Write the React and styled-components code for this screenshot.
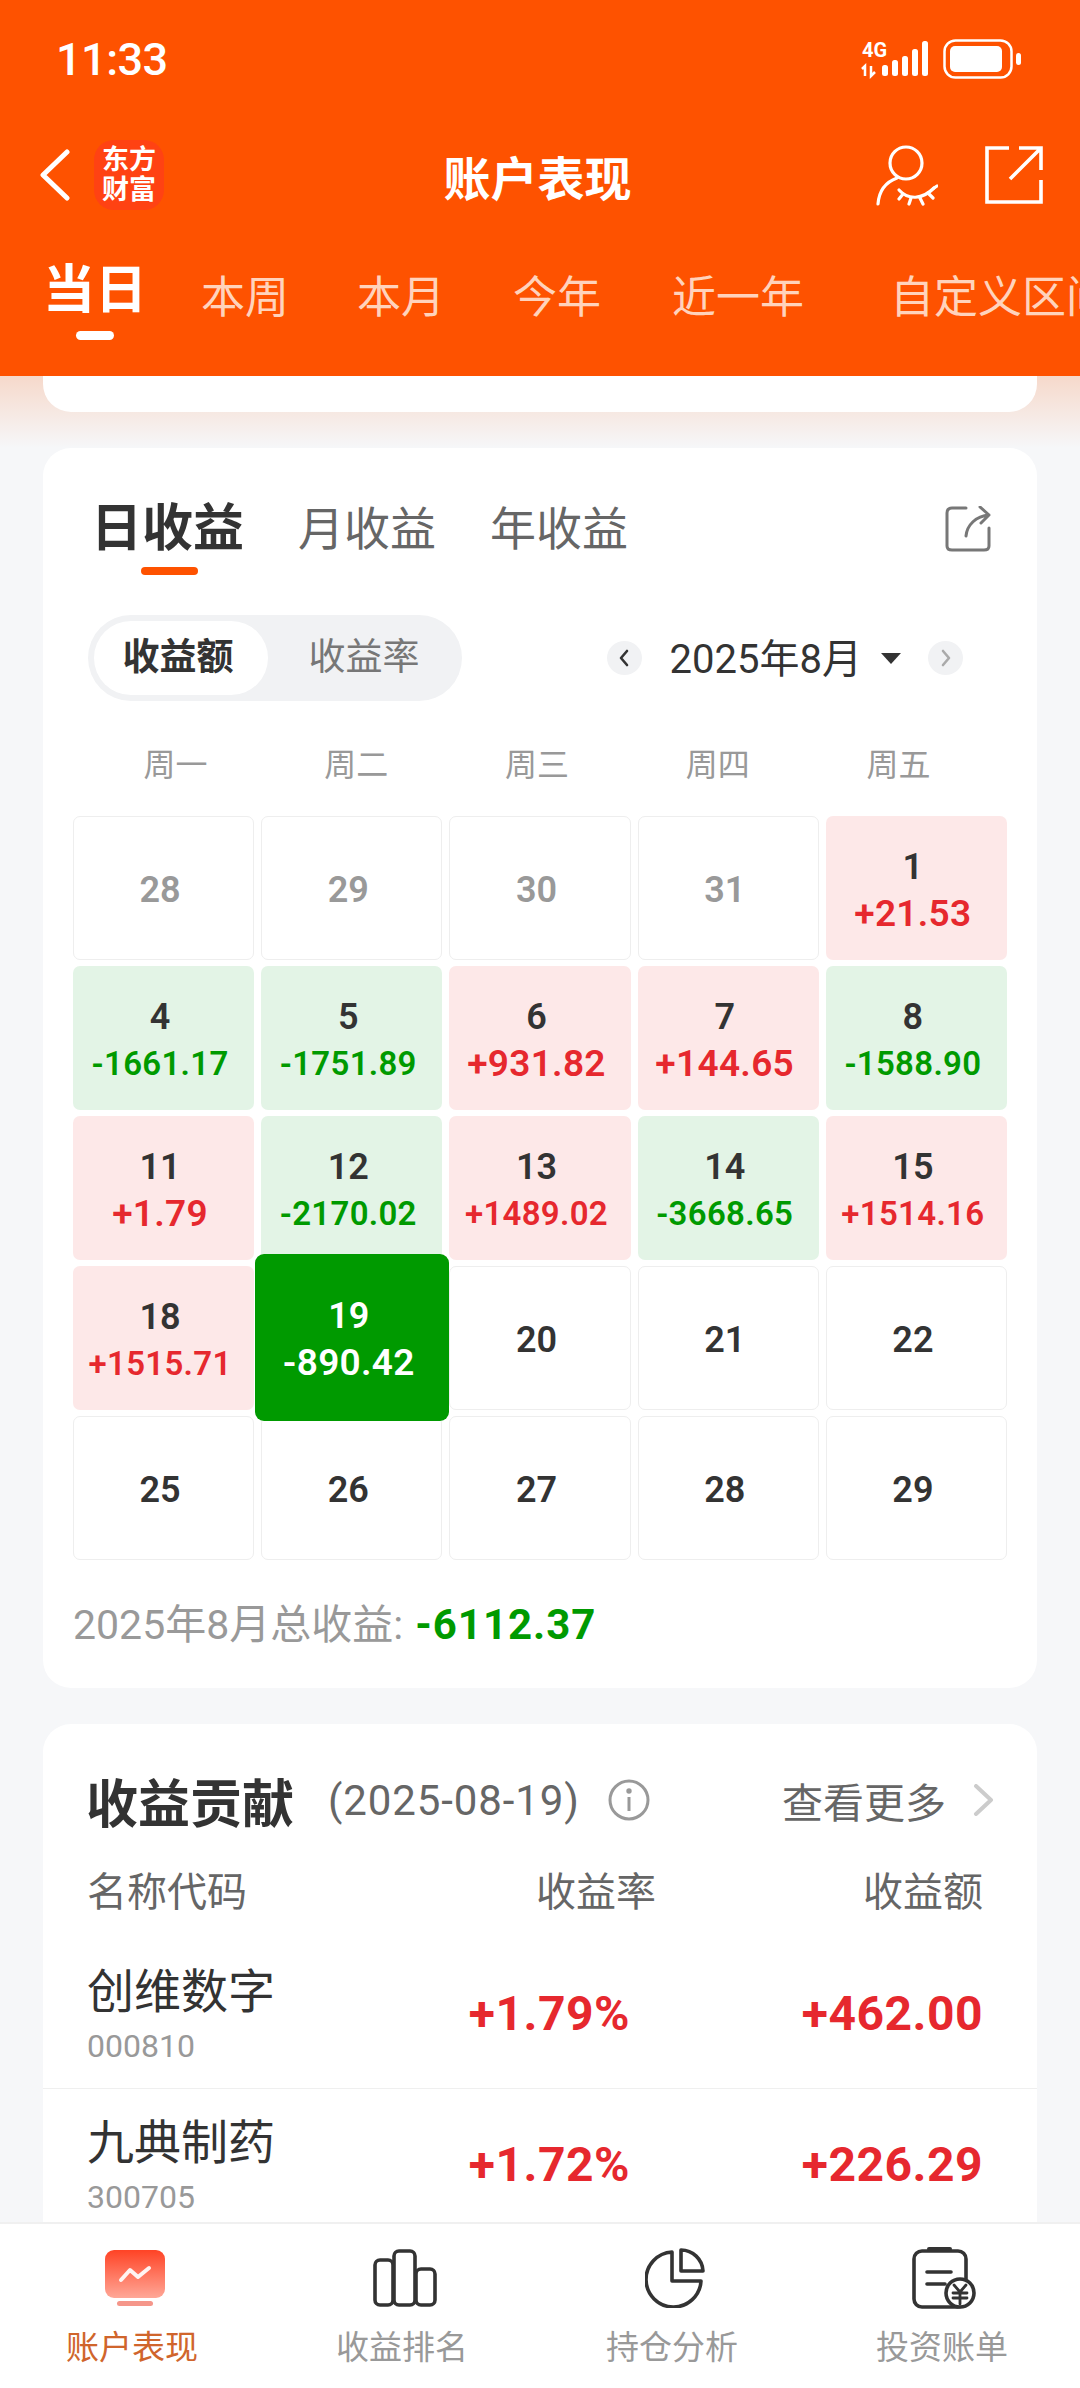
import styled, { createGlobalStyle } from 'styled-components';

const GlobalStyle = createGlobalStyle`
  html, body {
    margin: 0;
    padding: 0;
    background: #f6f7f9;
  }
  body {
    font-family: 'Roboto', 'Noto Sans CJK SC', sans-serif;
  }
`;

const Page = styled.div`
  display: flex;
  flex-direction: column;
  width: 1080px;
  height: 2388px;
  overflow: hidden;
`;

//! Header

const Header = styled.header`
  flex: none;
  height: 376px;
  background: #fe5200;
  color: #fff;
  overflow: hidden;
`;

const StatusBar = styled.div`
  display: flex;
  align-items: center;
  justify-content: space-between;
  height: 118px;
  padding: 0 59px 0 56px;
`;

const StatusIcons = styled.div`
  display: flex;
  align-items: center;
  gap: 15px;
`;

const Clock = styled.span`
  font-size: 45px;
  font-weight: 500;
  letter-spacing: -0.5px;
`;

const TopBar = styled.div`
  display: grid;
  grid-template-columns: 1fr auto 1fr;
  align-items: center;
  height: 114px;
  padding: 0 37px 0 40px;
`;

const TopLeft = styled.div`
  display: flex;
  align-items: center;
  gap: 24px;
`;

const TopRight = styled.div`
  display: flex;
  align-items: center;
  justify-content: flex-end;
  gap: 47px;
`;

const Logo = styled.div`
  display: flex;
  align-items: center;
  justify-content: center;
  width: 70px;
  height: 70px;
  border-radius: 20px;
  background: #ff4213;
  font-size: 27px;
  line-height: 30px;
  font-weight: 700;
  text-align: center;
`;

const Title = styled.h1`
  margin: 0 0 0 -8px;
  font-size: 47px;
  font-weight: 700;
`;

const PeriodTabs = styled.div`
  display: flex;
  align-items: flex-start;
  gap: 68px;
  padding-left: 43px;
  white-space: nowrap;
`;

const PeriodTab = styled.div`
  display: flex;
  flex-direction: column;
  align-items: center;
  margin-right: ${p => (p.$active ? '-14px' : '0')};
  margin-left: ${p => p.$shift || '0'};
  padding-top: ${p => (p.$active ? '28px' : '38px')};
  font-size: ${p => (p.$active ? '52px' : '44px')};
  font-weight: ${p => (p.$active ? 700 : 400)};
  line-height: ${p => (p.$active ? '62px' : '56px')};
  color: ${p => (p.$active ? '#fff' : '#ffd3bc')};
`;

const PeriodMark = styled.span`
  width: 38px;
  height: 9px;
  margin-top: 9px;
  border-radius: 5px;
  background: #fff;
`;

//! Content

const Content = styled.main`
  flex: 1;
  min-height: 0;
  overflow: hidden;
  padding: 0 43px;
  background: linear-gradient(#f6d9cb 0, #f6f7f9 72px);
`;

const ClippedCard = styled.div`
  height: 36px;
  border-radius: 0 0 28px 28px;
  background: #fff;
`;

const Card = styled.section`
  margin-top: 36px;
  border-radius: 28px;
  background: #fff;
`;

const CalendarCard = styled(Card)`
  padding: 52px 30px 37px;
`;

const ModeRow = styled.div`
  display: flex;
  align-items: flex-start;
  gap: 54px;
  padding: 0 16px 0 18px;
`;

const ModeTab = styled.div`
  display: flex;
  flex-direction: column;
  align-items: center;
  font-size: ${p => (p.$active ? '51px' : '46px')};
  font-weight: ${p => (p.$active ? 700 : 400)};
  line-height: 58px;
  color: ${p => (p.$active ? '#333' : '#666')};
`;

const ModeMark = styled.span`
  width: 57px;
  height: 8px;
  margin: 9px 0 0 4px;
  border-radius: 4px;
  background: #fe5200;
`;

const ShareButton = styled.div`
  margin: 6px 0 0 auto;
  line-height: 0;
`;

const FilterRow = styled.div`
  display: flex;
  align-items: center;
  justify-content: space-between;
  margin-top: 40px;
  padding: 0 44px 0 15px;
`;

const Segment = styled.div`
  display: flex;
  align-items: center;
  width: 374px;
  height: 86px;
  box-sizing: border-box;
  padding: 0 6px;
  border-radius: 43px;
  background: #f1f2f4;
`;

const SegmentItem = styled.div`
  box-sizing: border-box;
  width: ${p => (p.$active ? '174px' : '182px')};
  height: 74px;
  padding: ${p => (p.$active ? '0 6px 0 0' : '0 0 0 10px')};
  border-radius: 37px;
  background: ${p => (p.$active ? '#fff' : 'transparent')};
  font-size: 37px;
  font-weight: ${p => (p.$active ? 700 : 400)};
  line-height: 74px;
  text-align: center;
  color: ${p => (p.$active ? '#333' : '#777')};
`;

const MonthPicker = styled.div`
  display: flex;
  align-items: center;
  font-size: 40px;
  color: #333;
`;

const MonthArrow = styled.span`
  display: flex;
  align-items: center;
  justify-content: center;
  width: 35px;
  height: 34px;
  border-radius: 50%;
  background: #f1f2f4;
`;

const MonthLabel = styled.span`
  margin: -4px 19px 0 28px;
`;

const Caret = styled.span`
  width: 0;
  height: 0;
  margin-right: 27px;
  border-left: 10px solid transparent;
  border-right: 10px solid transparent;
  border-top: 11px solid #333;
`;

const Weekdays = styled.div`
  display: grid;
  grid-template-columns: repeat(5, 180.8px);
  margin: 42px 0 29px 12px;
  font-size: 32px;
  line-height: 44px;
  text-align: center;
  color: #999;
`;

const DayGrid = styled.div`
  display: grid;
  grid-template-columns: repeat(5, 1fr);
  grid-auto-rows: 144px;
  gap: 6px 7px;
`;

const DayCell = styled.div`
  position: relative;
  display: flex;
  flex-direction: column;
  align-items: center;
  justify-content: center;
  box-sizing: border-box;
  padding: 4px 7px 0 0;
  border-radius: 7px;
  border: ${p => (p.$tone === 'plain' || p.$tone === 'past' ? '1px solid #eeeeee' : 'none')};
  background: ${p => ({ up: '#fde8e8', down: '#e3f4e6', today: '#009a00' }[p.$tone] || '#fff')};
  color: ${p => ({ past: '#999', today: '#fff' }[p.$tone] || '#333')};
  ${p => p.$tone === 'today' && `
    z-index: 1;
    margin: -12px -7px -11px -6px;
    border-radius: 9px;
  `}
`;

const DayNumber = styled.div`
  font-size: 36px;
  font-weight: 600;
  line-height: 44px;
`;

const DayValue = styled.div`
  margin-top: 3px;
  font-size: ${p => (p.$long ? '33px' : '37px')};
  font-weight: 600;
  line-height: 44px;
  letter-spacing: 0.3px;
  color: ${p => ({ up: '#e6282e', down: '#009a00', today: '#fff' }[p.$tone])};
`;

const MonthTotal = styled.div`
  display: flex;
  align-items: baseline;
  gap: 12px;
  margin-top: 39px;
  font-size: 41px;
  line-height: 52px;
  color: #999;

  b {
    font-size: 42px;
    font-weight: 700;
    letter-spacing: 1px;
    color: #009a00;
  }
`;

const ContribCard = styled(Card)`
  padding-top: 48px;
  border-radius: 28px 28px 0 0;
`;

const ContribHead = styled.div`
  display: flex;
  align-items: center;
  height: 56px;
  padding: 0 42px 0 43px;
`;

const ContribTitle = styled.h2`
  margin: 0;
  font-size: 52px;
  font-weight: 700;
  color: #333;
`;

const ContribDate = styled.span`
  margin: 0 28px 0 34px;
  font-size: 42px;
  letter-spacing: 0.9px;
  color: #666;
`;

const MoreLink = styled.span`
  display: flex;
  align-items: center;
  gap: 27px;
  margin-left: auto;
  font-size: 41px;
  color: #666;
`;

const ColumnHead = styled.div`
  display: grid;
  grid-template-columns: 1fr 170px 327px;
  margin-top: 40px;
  margin-bottom: 20px;
  padding: 0 54px 0 44px;
  font-size: 40px;
  line-height: 50px;
  color: #666;

  span + span {
    text-align: right;
  }
`;

const StockRow = styled.div`
  display: grid;
  grid-template-columns: 1fr 200px 353px;
  align-items: center;
  height: 150px;
  padding: 0 54px 0 44px;
  border-bottom: 1px solid #efefef;
`;

const StockName = styled.div`
  margin-top: 4px;
  font-size: 47px;
  line-height: 60px;
  color: #333;
`;

const StockCode = styled.div`
  margin-top: 2px;
  font-size: 32px;
  line-height: 44px;
  color: #999;
`;

const StockValue = styled.div`
  margin-top: 0;
  font-size: 48px;
  font-weight: 700;
  letter-spacing: 0.5px;
  text-align: right;
  color: #e6282e;
`;

//! Bottom nav

const BottomNav = styled.nav`
  flex: none;
  display: grid;
  grid-template-columns: repeat(4, 270px);
  height: 166px;
  box-sizing: border-box;
  margin-left: -3px;
  border-top: 2px solid #f0f0f0;
  background: #fff;
`;

const NavItem = styled.div`
  display: flex;
  flex-direction: column;
  align-items: center;
  font-size: 33px;
  line-height: 44px;
  color: ${p => (p.$active ? '#d0652c' : '#999')};
`;

const NavIcon = styled.div`
  display: flex;
  align-items: center;
  justify-content: center;
  height: 62px;
  margin: 23px 0 17px 6px;
`;

//! Icons

const SignalIcon = () => (
  <svg width="66" height="36" viewBox="0 0 66 36" fill="#fff" overflow="visible">
    <text x="0" y="16" fontFamily="Roboto" fontWeight="700" fontSize="20" fill="#fff">4G</text>
    <path d="M3 35V25l-3 3" stroke="#fff" strokeWidth="2.5" fill="none" />
    <path d="M9 25v10l4-4" stroke="#fff" strokeWidth="2.5" fill="none" />
    <rect x="20" y="24" width="6" height="11" rx="2.5" />
    <rect x="30" y="19" width="6" height="16" rx="2.5" />
    <rect x="40" y="15" width="6" height="20" rx="2.5" />
    <rect x="50" y="8" width="6" height="27" rx="2.5" />
    <rect x="60" y="0" width="6" height="35" rx="2.5" />
  </svg>
);

const BatteryIcon = () => (
  <svg width="78" height="40" viewBox="0 0 78 40">
    <rect x="1.5" y="1.5" width="67" height="37" rx="11" fill="none" stroke="#fff" strokeWidth="2.5" />
    <rect x="7" y="7" width="52" height="26" rx="5" fill="#fff" />
    <rect x="73" y="14" width="5" height="12" rx="2.5" fill="#fff" />
  </svg>
);

const BackIcon = () => (
  <svg width="30" height="52" viewBox="0 0 30 52" fill="none" stroke="#fff" strokeWidth="5" strokeLinecap="round" strokeLinejoin="round">
    <polyline points="27,3 3,26 27,49" />
  </svg>
);

const EyeUserIcon = () => (
  <svg width="62" height="62" viewBox="0 0 62 62" fill="none" stroke="#fff" strokeWidth="3.2" strokeLinecap="round">
    <circle cx="30" cy="19" r="16" />
    <path d="M21 34C10 38 3 47 2 60" />
    <path d="M23 46C32 56 46 56 58 44" />
    <path d="M27 50l-4 5M35 54l-2 6M44 54l3 6M52 49l5 5M58 44l3-2" />
  </svg>
);

const ExportIcon = () => (
  <svg width="58" height="58" viewBox="0 0 58 58" fill="none" stroke="#fff" strokeWidth="3.6">
    <path d="M24 2H2V56H56V34" />
    <path d="M25 33L56 2M34 2H56V24" />
  </svg>
);

const ShareIcon = () => (
  <svg width="46" height="46" viewBox="0 0 46 46" fill="none" stroke="#777" strokeWidth="3" strokeLinecap="round" strokeLinejoin="round">
    <path d="M21 2H7Q2 2 2 7V40Q2 44 7 44H39Q44 44 44 40V22" />
    <path d="M21 30C22 19 31 10 44 9M35 1l9 8-8 8" />
  </svg>
);

const SmallChevron = ({ left }) => (
  <svg width="12" height="18" viewBox="0 0 12 18" fill="none" stroke={left ? '#333' : '#aaa'} strokeWidth="2.6" strokeLinecap="round" strokeLinejoin="round">
    <polyline points={left ? '9,2 3,9 9,16' : '3,2 9,9 3,16'} />
  </svg>
);

const InfoIcon = () => (
  <svg width="42" height="42" viewBox="0 0 42 42" fill="none" stroke="#999" strokeWidth="3">
    <circle cx="21" cy="21" r="19" />
    <path d="M21 18V32" />
    <circle cx="21" cy="12" r="1.2" fill="#999" />
  </svg>
);

const MoreIcon = () => (
  <svg width="22" height="32" viewBox="0 0 22 32" fill="none" stroke="#ccc" strokeWidth="4" strokeLinecap="round" strokeLinejoin="round">
    <polyline points="3,2 18,16 3,30" />
  </svg>
);

const PerformanceIcon = () => (
  <svg width="60" height="56" viewBox="0 0 60 56">
    <defs>
      <linearGradient id="perf" x1="0" y1="0" x2="0" y2="1">
        <stop offset="0" stopColor="#ff4325" />
        <stop offset="1" stopColor="#ffa797" />
      </linearGradient>
    </defs>
    <rect width="60" height="48" rx="9" fill="url(#perf)" />
    <rect x="12" y="51" width="36" height="5" rx="2.5" fill="#f5968a" />
    <polyline points="16,30 25,20 33,27 44,18" fill="none" stroke="#fff" strokeWidth="4" strokeLinecap="round" strokeLinejoin="round" opacity="0.92" />
  </svg>
);

const BarsIcon = () => (
  <svg width="64" height="58" viewBox="0 0 64 58" fill="none" stroke="#333" strokeWidth="3.6" strokeLinejoin="round">
    <rect x="2" y="11" width="18" height="45" rx="5" />
    <rect x="21" y="2" width="21" height="54" rx="5" />
    <rect x="43" y="20" width="19" height="36" rx="5" />
  </svg>
);

const PieIcon = () => (
  <svg width="60" height="60" viewBox="0 0 60 60" fill="none" stroke="#333" strokeWidth="3.6" strokeLinejoin="round">
    <path d="M27 4V33H56A27.5 27.5 0 1 1 27 4Z" />
    <path d="M36 2V23H58A22 22 0 0 0 36 2Z" />
  </svg>
);

const BillIcon = () => (
  <svg width="66" height="62" viewBox="0 0 66 62" fill="none" stroke="#333" strokeWidth="3.6" strokeLinecap="round">
    <rect x="2" y="4" width="52" height="56" rx="8" />
    <path d="M17 2H38" strokeWidth="4" />
    <path d="M15 25H39M15 37H33" />
    <circle cx="48" cy="46" r="14" fill="#fff" />
    <path d="M42 38l6 7 6-7M41 46H55M41 51H55M48 45V57" strokeWidth="2.8" />
  </svg>
);

//! Data

const MODES = ['日收益', '月收益', '年收益'];
const PERIODS = [
  { label: '当日' },
  { label: '本周' },
  { label: '本月' },
  { label: '今年' },
  { label: '近一年', shift: '3px' },
  { label: '自定义区间', shift: '18px' },
];
const WEEKDAYS = ['周一', '周二', '周三', '周四', '周五'];

const DAYS = [
  { day: 28, tone: 'past' },
  { day: 29, tone: 'past' },
  { day: 30, tone: 'past' },
  { day: 31, tone: 'past' },
  { day: 1, value: '+21.53', tone: 'up' },
  { day: 4, value: '-1661.17', tone: 'down' },
  { day: 5, value: '-1751.89', tone: 'down' },
  { day: 6, value: '+931.82', tone: 'up' },
  { day: 7, value: '+144.65', tone: 'up' },
  { day: 8, value: '-1588.90', tone: 'down' },
  { day: 11, value: '+1.79', tone: 'up' },
  { day: 12, value: '-2170.02', tone: 'down' },
  { day: 13, value: '+1489.02', tone: 'up' },
  { day: 14, value: '-3668.65', tone: 'down' },
  { day: 15, value: '+1514.16', tone: 'up' },
  { day: 18, value: '+1515.71', tone: 'up' },
  { day: 19, value: '-890.42', tone: 'today' },
  { day: 20, tone: 'plain' },
  { day: 21, tone: 'plain' },
  { day: 22, tone: 'plain' },
  { day: 25, tone: 'plain' },
  { day: 26, tone: 'plain' },
  { day: 27, tone: 'plain' },
  { day: 28, tone: 'plain' },
  { day: 29, tone: 'plain' },
];

const STOCKS = [
  { name: '创维数字', code: '000810', rate: '+1.79%', amount: '+462.00' },
  { name: '九典制药', code: '300705', rate: '+1.72%', amount: '+226.29' },
];

const NAV = [
  { label: '账户表现', icon: <PerformanceIcon />, active: true },
  { label: '收益排名', icon: <BarsIcon /> },
  { label: '持仓分析', icon: <PieIcon /> },
  { label: '投资账单', icon: <BillIcon /> },
];

const App = () => {
  return (
    <Page>
      <GlobalStyle />
      <Header>
        <StatusBar>
          <Clock>11:33</Clock>
          <StatusIcons>
            <SignalIcon />
            <BatteryIcon />
          </StatusIcons>
        </StatusBar>
        <TopBar>
          <TopLeft>
            <BackIcon />
            <Logo>
              东方
              <br />
              财富
            </Logo>
          </TopLeft>
          <Title>账户表现</Title>
          <TopRight>
            <EyeUserIcon />
            <ExportIcon />
          </TopRight>
        </TopBar>
        <PeriodTabs>
          {PERIODS.map((period, i) => (
            <PeriodTab key={period.label} $active={i === 0} $shift={period.shift}>
              {period.label}
              {i === 0 && <PeriodMark />}
            </PeriodTab>
          ))}
        </PeriodTabs>
      </Header>

      <Content>
        <ClippedCard />
        <CalendarCard>
          <ModeRow>
            {MODES.map((mode, i) => (
              <ModeTab key={mode} $active={i === 0}>
                {mode}
                {i === 0 && <ModeMark />}
              </ModeTab>
            ))}
            <ShareButton>
              <ShareIcon />
            </ShareButton>
          </ModeRow>
          <FilterRow>
            <Segment>
              <SegmentItem $active>收益额</SegmentItem>
              <SegmentItem>收益率</SegmentItem>
            </Segment>
            <MonthPicker>
              <MonthArrow>
                <SmallChevron left />
              </MonthArrow>
              <MonthLabel>2025年8月</MonthLabel>
              <Caret />
              <MonthArrow>
                <SmallChevron />
              </MonthArrow>
            </MonthPicker>
          </FilterRow>
          <Weekdays>
            {WEEKDAYS.map(day => (
              <div key={day}>{day}</div>
            ))}
          </Weekdays>
          <DayGrid>
            {DAYS.map(({ day, value, tone }) => (
              <DayCell key={`${day}-${tone}`} $tone={tone}>
                <DayNumber>{day}</DayNumber>
                {value && (
                  <DayValue $tone={tone} $long={value.length > 7}>
                    {value}
                  </DayValue>
                )}
              </DayCell>
            ))}
          </DayGrid>
          <MonthTotal>
            2025年8月总收益:
            <b>-6112.37</b>
          </MonthTotal>
        </CalendarCard>

        <ContribCard>
          <ContribHead>
            <ContribTitle>收益贡献</ContribTitle>
            <ContribDate>(2025-08-19)</ContribDate>
            <InfoIcon />
            <MoreLink>
              查看更多
              <MoreIcon />
            </MoreLink>
          </ContribHead>
          <ColumnHead>
            <span>名称代码</span>
            <span>收益率</span>
            <span>收益额</span>
          </ColumnHead>
          {STOCKS.map(stock => (
            <StockRow key={stock.code}>
              <div>
                <StockName>{stock.name}</StockName>
                <StockCode>{stock.code}</StockCode>
              </div>
              <StockValue>{stock.rate}</StockValue>
              <StockValue>{stock.amount}</StockValue>
            </StockRow>
          ))}
        </ContribCard>
      </Content>

      <BottomNav>
        {NAV.map(item => (
          <NavItem key={item.label} $active={item.active}>
            <NavIcon>{item.icon}</NavIcon>
            {item.label}
          </NavItem>
        ))}
      </BottomNav>
    </Page>
  );
};

export default App;
